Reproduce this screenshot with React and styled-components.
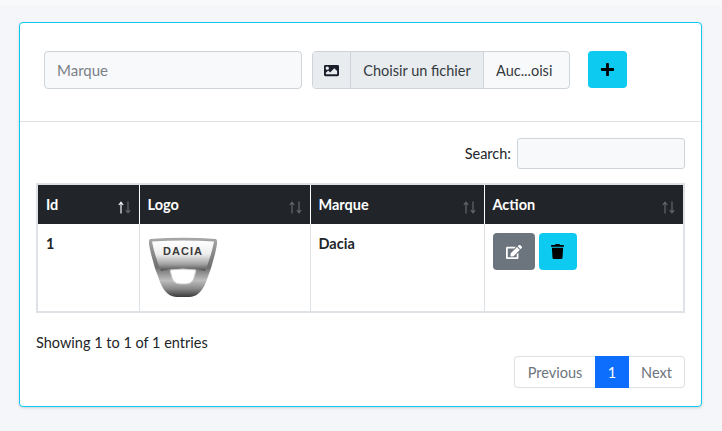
import React from "react";
import styled, { createGlobalStyle } from "styled-components";
import { FaImage, FaPlus, FaEdit, FaTrash } from "react-icons/fa";

const GlobalStyle = createGlobalStyle`
  html, body { margin: 0; padding: 0; background: #f4f6f9; }
  body { font-family: "Lato", "Open Sans", sans-serif; color: #212529; }
  * { box-sizing: border-box; }
`;

const TopStrip = styled.div`
  height: 6px;
  background: #f8f9fa;
`;

const Page = styled.div`
  height: 425px;
  padding: 16px 20px 24px 19px;
`;

const Card = styled.div`
  height: 385px;
  background: #fff;
  border: 1px solid #0dcaf0;
  border-radius: 4px;
  box-shadow: 0 1px 3px rgba(0, 0, 0, 0.15);
`;

const FormRow = styled.div`
  height: 99px;
  padding: 28px 24px 0 24px;
  display: flex;
  align-items: flex-start;
  border-bottom: 1px solid #dee2e6;
`;

const TextInput = styled.input`
  width: 258px;
  height: 38px;
  padding: 0 12px;
  margin-right: 10px;
  font: 15px "Lato", sans-serif;
  color: #212529;
  background: #f8f9fa;
  border: 1px solid #ced4da;
  border-radius: 4px;
  &::placeholder { color: #7b8188; opacity: 1; }
`;

const FileGroup = styled.div`
  width: 258px;
  height: 38px;
  margin-right: 18px;
  display: flex;
  align-items: stretch;
  background: #f8f9fa;
  border: 1px solid #ced4da;
  border-radius: 4px;
  overflow: hidden;
  font-size: 14.5px;
`;

const FileIcon = styled.div`
  width: 38px;
  display: flex;
  align-items: center;
  justify-content: center;
  background: #e9ecef;
  border-right: 1px solid #ced4da;
  color: #1a1f2b;
  font-size: 15px;
`;

const FileButton = styled.div`
  width: 133px;
  display: flex;
  align-items: center;
  justify-content: center;
  background: #e9ecef;
  border-right: 1px solid #ced4da;
  color: #343a40;
`;

const FileName = styled.div`
  flex: 1;
  display: flex;
  align-items: center;
  padding-left: 12px;
  color: #343a40;
`;

const IconButton = styled.button`
  width: ${(p) => p.$width}px;
  height: ${(p) => p.$height}px;
  padding: 0;
  display: flex;
  align-items: center;
  justify-content: center;
  border: none;
  border-radius: 4px;
  background: ${(p) => p.$bg};
  color: ${(p) => p.$fg};
  font-size: ${(p) => p.$size}px;
`;

const Body = styled.div`
  padding: 16px 16px 0 16px;
`;

const SearchRow = styled.div`
  display: flex;
  justify-content: flex-end;
  align-items: center;
  gap: 6px;
  font-size: 14.5px;
  margin-bottom: 14px;
`;

const SearchInput = styled.input`
  width: 168px;
  height: 31px;
  background: #f8f9fa;
  border: 1px solid #ced4da;
  border-radius: 3px;
`;

const Table = styled.table`
  width: 649px;
  table-layout: fixed;
  border-collapse: collapse;
  border: 2px solid #dee2e6;
`;

const Head = styled.th`
  position: relative;
  height: 40px;
  padding: 0 8px;
  background: #212529;
  border-right: 1px solid #fff;
  color: #fff;
  font-size: 14.5px;
  font-weight: 700;
  text-align: left;
  &:last-child { border-right: none; }
`;

const SortArrows = styled.svg`
  position: absolute;
  right: 7px;
  top: 16px;
  display: block;
`;

const Cell = styled.td`
  height: 88px;
  padding: ${(p) => p.$pad || "11px 8px"};
  vertical-align: top;
  border-right: 1px solid #dee2e6;
  font-size: 14.5px;
  font-weight: 700;
  &:last-child { border-right: none; }
`;

const ActionRow = styled.div`
  display: flex;
  gap: 4px;
`;

const Info = styled.div`
  margin-top: 20px;
  font-size: 14.5px;
  line-height: 20px;
`;

const PagerRow = styled.div`
  display: flex;
  justify-content: flex-end;
  margin-top: 3px;
`;

const Pager = styled.div`
  height: 32px;
  display: flex;
  font-size: 14.5px;
`;

const PageLink = styled.div`
  width: ${(p) => p.$width}px;
  display: flex;
  align-items: center;
  justify-content: center;
  border: 1px solid ${(p) => (p.$active ? "#0d6efd" : "#dee2e6")};
  border-left-width: ${(p) => (p.$side === "right" ? 0 : 1)}px;
  border-right-width: ${(p) => (p.$side === "left" ? 0 : 1)}px;
  border-radius: ${(p) =>
    p.$side === "left" ? "4px 0 0 4px" : p.$side === "right" ? "0 4px 4px 0" : "0"};
  background: ${(p) => (p.$active ? "#0d6efd" : "#fff")};
  color: ${(p) => (p.$active ? "#fff" : "#6c757d")};
`;

function SortIcon({ active }) {
  return (
    <SortArrows width="15" height="13" viewBox="0 0 15 13" fill="none" strokeWidth="1.2">
      <g stroke="#fff" opacity={active ? 0.95 : 0.3}>
        <path d="M4 12.5V1.5M1.8 4L4 1.2L6.2 4" />
      </g>
      <g stroke="#fff" opacity="0.3">
        <path d="M11 0.5V11.5M8.8 9L11 11.8L13.2 9" />
      </g>
    </SortArrows>
  );
}

function DaciaLogo() {
  return (
    <svg width="70" height="62" viewBox="0 0 70 62" style={{ display: "block" }}>
      <defs>
        <linearGradient id="shield" x1="0" y1="0" x2="0" y2="1">
          <stop offset="0" stopColor="#a8a8a8" />
          <stop offset="0.5" stopColor="#6e6e6e" />
          <stop offset="0.72" stopColor="#bdbdbd" />
          <stop offset="0.86" stopColor="#8a8a8a" />
          <stop offset="1" stopColor="#3a3a3a" />
        </linearGradient>
        <linearGradient id="panel" x1="0" y1="0" x2="0" y2="1">
          <stop offset="0" stopColor="#ffffff" />
          <stop offset="0.45" stopColor="#eeeeee" />
          <stop offset="0.78" stopColor="#a0a0a0" />
          <stop offset="1" stopColor="#4e4e4e" />
        </linearGradient>
      </defs>
      <path
        d="M2 2 Q35 -0.5 68 2 Q69.5 3 69 7 Q66 25 58 45 Q52 60 41 60 L29 60 Q18 60 12 45 Q4 25 1 7 Q0.5 3 2 2 Z"
        fill="url(#shield)"
      />
      <path
        d="M4 4.5 Q35 2.5 66 4.5 Q63 20 57 34 Q35 28 13 34 Q7 20 4 4.5 Z"
        fill="url(#panel)"
      />
      <path
        d="M22 33 Q35 31 48 33 L46 41 Q44 47 38 47 L32 47 Q26 47 24 41 Z"
        fill="#fff"
        stroke="#c8c8c8"
        strokeWidth="1"
      />
      <text
        x="35"
        y="18"
        textAnchor="middle"
        fontFamily="Liberation Sans, sans-serif"
        fontWeight="700"
        fontSize="11"
        letterSpacing="1"
        fill="#3a3a3a"
      >
        DACIA
      </text>
    </svg>
  );
}

export default function App() {
  return (
    <>
      <GlobalStyle />
      <TopStrip />
      <Page>
        <Card>
          <FormRow>
            <TextInput placeholder="Marque" />
            <FileGroup>
              <FileIcon>
                <FaImage />
              </FileIcon>
              <FileButton>Choisir un fichier</FileButton>
              <FileName>Auc...oisi</FileName>
            </FileGroup>
            <IconButton $width={39} $height={37} $bg="#0dcaf0" $fg="#000" $size={15}>
              <FaPlus />
            </IconButton>
          </FormRow>
          <Body>
            <SearchRow>
              <span>Search:</span>
              <SearchInput />
            </SearchRow>
            <Table>
              <colgroup>
                <col style={{ width: 102 }} />
                <col style={{ width: 171 }} />
                <col style={{ width: 174 }} />
                <col />
              </colgroup>
              <thead>
                <tr>
                  <Head>Id<SortIcon active /></Head>
                  <Head>Logo<SortIcon /></Head>
                  <Head>Marque<SortIcon /></Head>
                  <Head>Action<SortIcon /></Head>
                </tr>
              </thead>
              <tbody>
                <tr>
                  <Cell>1</Cell>
                  <Cell $pad="13px 8px 0">
                    <DaciaLogo />
                  </Cell>
                  <Cell>Dacia</Cell>
                  <Cell $pad="9px 8px">
                    <ActionRow>
                      <IconButton $width={42} $height={37} $bg="#6c757d" $fg="#fff" $size={16}>
                        <FaEdit />
                      </IconButton>
                      <IconButton $width={38} $height={37} $bg="#0dcaf0" $fg="#000" $size={15}>
                        <FaTrash />
                      </IconButton>
                    </ActionRow>
                  </Cell>
                </tr>
              </tbody>
            </Table>
            <Info>Showing 1 to 1 of 1 entries</Info>
            <PagerRow>
              <Pager>
                <PageLink $width={81} $side="left">Previous</PageLink>
                <PageLink $width={34} $active>1</PageLink>
                <PageLink $width={56} $side="right">Next</PageLink>
              </Pager>
            </PagerRow>
          </Body>
        </Card>
      </Page>
    </>
  );
}
